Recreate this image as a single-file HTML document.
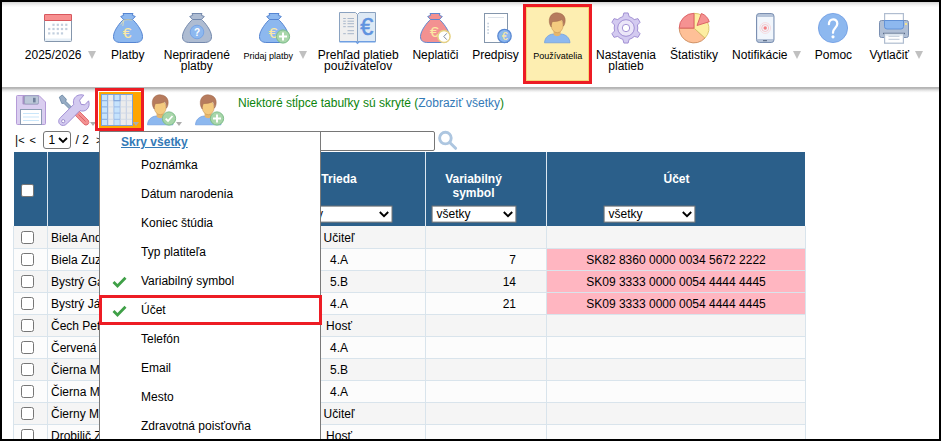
<!DOCTYPE html><html><head><meta charset="utf-8"><title>Platby</title><style>
html,body{margin:0;padding:0;background:#fff;}
body{width:941px;height:441px;overflow:hidden;position:relative;font-family:"Liberation Sans",sans-serif;font-size:12px;color:#000;}
#f{position:absolute;left:0;top:0;width:941px;height:441px;overflow:hidden;background:#fff;}
.a{position:absolute;}
svg{position:absolute;overflow:visible;}
.lb{position:absolute;text-align:center;white-space:nowrap;line-height:11px;font-size:12px;color:#000;transform:translateX(-50%);}
.sm{font-size:9px;}
.tri{position:absolute;width:0;height:0;border-left:4.3px solid transparent;border-right:4.3px solid transparent;border-top:8.200px solid #c0c0c0;}
.tr2{position:absolute;width:0;height:0;border-left:3.700px solid transparent;border-right:3.700px solid transparent;border-top:4.200px solid #acacac;}
.row{position:absolute;left:14px;width:791px;height:21px;border-bottom:1px solid #d9e4ec;}
.cb{position:absolute;left:21px;width:11px;height:11px;border:1px solid #767676;border-radius:2.5px;background:#fff;}
.nm{position:absolute;left:51px;line-height:14px;white-space:nowrap;}
.tc{position:absolute;left:339px;transform:translateX(-50%);line-height:14px;white-space:nowrap;}
.vs{position:absolute;right:425px;line-height:14px;white-space:nowrap;}
.ib{position:absolute;left:547px;width:258px;text-align:center;line-height:14px;white-space:nowrap;}
.mi{position:absolute;left:141px;line-height:14px;white-space:nowrap;}
.sel{position:absolute;background:#fff;border:1px solid #767676;box-sizing:border-box;height:17px;line-height:15px;font-size:12px;padding-left:3px;}
.hd{position:absolute;color:#fff;font-weight:bold;text-align:center;line-height:13.6px;white-space:nowrap;transform:translateX(-50%);}
</style></head><body><div id="f"><div class="a" style="left:2px;top:2px;width:937px;height:85px;background:linear-gradient(#d4d4d4 0,#e6e6e6 1.500px,#f6f6f6 3.500px,#fff 5.500px);"></div><div class="a" style="left:2px;top:86px;width:937px;height:7px;background:linear-gradient(#fff 0,#fff .6px,#b2b2b2 .7px,#b9b9b9 2.400px,#d4d4d4 3.500px,#ececec 4.800px,#fff 6.800px);"></div><svg style="left:44px;top:14px" width="28" height="28" viewBox="0 0 28 28"><rect x=".5" y=".5" width="27" height="27" rx="1" fill="#fff" stroke="#8496ac"/><rect x="1" y="24.500" width="26" height="2.500" fill="#e6eff7"/><rect x=".5" y=".5" width="27" height="6" rx=".5" fill="#f79090" stroke="#d9575d"/><rect x="8.4" y="9.7" width="2.2" height="2.2" fill="#c2cfde"/><rect x="12.7" y="9.7" width="2.2" height="2.2" fill="#c2cfde"/><rect x="16.9" y="9.7" width="2.2" height="2.2" fill="#c2cfde"/><rect x="21.2" y="9.7" width="2.2" height="2.2" fill="#c2cfde"/><rect x="4.1" y="13.9" width="2.2" height="2.2" fill="#c2cfde"/><rect x="8.4" y="13.9" width="2.2" height="2.2" fill="#c2cfde"/><rect x="12.7" y="13.9" width="2.2" height="2.2" fill="#c2cfde"/><rect x="16.9" y="13.9" width="2.2" height="2.2" fill="#c2cfde"/><rect x="21.2" y="13.9" width="2.2" height="2.2" fill="#c2cfde"/><rect x="4.1" y="18.3" width="2.2" height="2.2" fill="#c2cfde"/><rect x="8.4" y="18.3" width="2.2" height="2.2" fill="#c2cfde"/><rect x="12.7" y="18.3" width="2.2" height="2.2" fill="#c2cfde"/><rect x="16.9" y="18.3" width="2.2" height="2.2" fill="#c2cfde"/></svg><svg style="left:113px;top:13px" width="30" height="30" viewBox="0 0 30 30"><path d="M10.5 6.5C7.500 9 .5 17.500 .5 23.500C.5 27.800 3 29.500 8 29.500H22C27 29.500 29.500 27.800 29.500 23.500C29.500 17.500 22.500 9 19.500 6.500Z" fill="#8db8ef" stroke="#5585d2" stroke-width="1"/><path d="M10 .5H20L19.300 2.300L22.300 3.500L19.400 6.500H10.600L7.700 3.500L10.700 2.300Z" fill="#8db8ef" stroke="#5585d2" stroke-width="1" stroke-linejoin="round"/><path d="M10.700 7Q15 6.300 19.300 7" fill="none" stroke="#e9dc9c" stroke-width=".8"/><path d="M10.300 7.500L7.800 11.500M10.800 7.500L9.800 13" fill="none" stroke="#f3e6a6" stroke-width=".7"/><text x="14" y="24.6" font-family="Liberation Sans" font-size="15.5" fill="#fbe9a3" stroke="#fbe9a3" stroke-width=".2" text-anchor="middle">€</text></svg><svg style="left:182px;top:13px" width="30" height="30" viewBox="0 0 30 30"><path d="M10.5 6.5C7.500 9 .5 17.500 .5 23.500C.5 27.800 3 29.500 8 29.500H22C27 29.500 29.500 27.800 29.500 23.500C29.500 17.500 22.500 9 19.500 6.500Z" fill="#aebcd2" stroke="#7388ac" stroke-width="1"/><path d="M10 .5H20L19.300 2.300L22.300 3.500L19.400 6.500H10.600L7.700 3.500L10.700 2.300Z" fill="#aebcd2" stroke="#7388ac" stroke-width="1" stroke-linejoin="round"/><circle cx="15" cy="19" r="6.8" fill="#8db8ef" stroke="#6f9ee4" stroke-width=".8"/><text x="15" y="22.700" font-family="Liberation Sans" font-weight="bold" font-size="10" fill="#fff" text-anchor="middle">?</text></svg><svg style="left:259px;top:13px" width="30" height="30" viewBox="0 0 30 30"><path d="M10.5 6.5C7.500 9 .5 17.500 .5 23.500C.5 27.800 3 29.500 8 29.500H22C27 29.500 29.500 27.800 29.500 23.500C29.500 17.500 22.500 9 19.500 6.500Z" fill="#8db8ef" stroke="#5585d2" stroke-width="1"/><path d="M10 .5H20L19.300 2.300L22.300 3.500L19.400 6.500H10.600L7.700 3.500L10.700 2.300Z" fill="#8db8ef" stroke="#5585d2" stroke-width="1" stroke-linejoin="round"/><text x="14" y="24.8" font-family="Liberation Sans" font-size="15.5" fill="#fbe9a3" stroke="#fbe9a3" stroke-width=".2" text-anchor="middle">€</text><circle cx="24" cy="23.5" r="6.6" fill="#a8d6aa" stroke="#7dbd88" stroke-width="1"/><path d="M24 19.500V27.500M20 23.500H28" stroke="#fff" stroke-width="2"/></svg><svg style="left:339px;top:12px" width="37" height="32" viewBox="0 0 37 32"><path d="M.5 .5H16.500L18.500 2.500V29.500H.500Z" fill="#efefef" stroke="#8aa2c0"/><path d="M36.500 .5H20.500L18.500 2.500V29.500H36.500Z" fill="#dde9f5" stroke="#8aa2c0"/><path d="M.5 29.700H17L18.500 31.300L20 29.700H36.500" fill="none" stroke="#6f9fe2" stroke-width="1.400"/><path d="M4.200 6.5H6.800" stroke="#9fb0c6" stroke-width=".9"/><path d="M8.500 6.5H15" stroke="#9fb0c6" stroke-width=".9"/><path d="M4.200 9.2H6.800" stroke="#9fb0c6" stroke-width=".9"/><path d="M8.500 9.2H15" stroke="#9fb0c6" stroke-width=".9"/><path d="M4.200 11.7H6.800" stroke="#9fb0c6" stroke-width=".9"/><path d="M8.500 11.7H15" stroke="#9fb0c6" stroke-width=".9"/><path d="M4.200 14.7H6.800" stroke="#9fb0c6" stroke-width=".9"/><path d="M8.500 14.7H15" stroke="#9fb0c6" stroke-width=".9"/><path d="M8.500 18.7H15" stroke="#9fb0c6" stroke-width=".9"/><path d="M4.200 21.7H6.800" stroke="#9fb0c6" stroke-width=".9"/><path d="M8.500 21.7H15" stroke="#9fb0c6" stroke-width=".9"/><text x="27.700" y="22.500" font-family="Liberation Sans" font-size="23.500" fill="#5f93df" stroke="#5f93df" stroke-width=".5" text-anchor="middle">€</text></svg><svg style="left:420px;top:13px" width="30" height="30" viewBox="0 0 30 30"><path d="M10.5 6.5C7.500 9 .5 17.500 .5 23.500C.5 27.800 3 29.500 8 29.500H22C27 29.500 29.500 27.800 29.500 23.500C29.500 17.500 22.500 9 19.500 6.500Z" fill="#f39191" stroke="#5f86cf" stroke-width="1"/><path d="M10 .5H20L19.300 2.300L22.300 3.500L19.400 6.500H10.600L7.700 3.500L10.700 2.300Z" fill="#f39191" stroke="#5f86cf" stroke-width="1" stroke-linejoin="round"/><text x="14.2" y="24.2" font-family="Liberation Sans" font-size="15.5" fill="#fbe9a3" stroke="#fbe9a3" stroke-width=".2" text-anchor="middle">€</text><circle cx="24" cy="23.500" r="6.100" fill="#fff" stroke="#e6d182" stroke-width="1.500"/><path d="M26.800 20.300L23.800 23.500L26.800 26.700" fill="none" stroke="#6f7f9a" stroke-width=".9"/></svg><svg style="left:484px;top:13px" width="28" height="31" viewBox="0 0 28 31"><rect x=".5" y=".5" width="23" height="29" fill="#fff" stroke="#8496ac"/><path d="M4 4.500H20" stroke="#d5dde6" stroke-width=".8"/><rect x="3.300" y="9.7" width="1.600" height="1.600" fill="#c3cfdc"/><rect x="3.300" y="12.899999999999999" width="1.600" height="1.600" fill="#c3cfdc"/><rect x="3.300" y="16.099999999999998" width="1.600" height="1.600" fill="#c3cfdc"/><rect x="3.300" y="19.3" width="1.600" height="1.600" fill="#c3cfdc"/><circle cx="20.500" cy="23" r="6.700" fill="#8db8ef" stroke="#5a89d3" stroke-width="1.300"/><text x="20.7" y="26.5" font-family="Liberation Sans" font-size="10" fill="#fbe9a3" stroke="#fbe9a3" stroke-width=".2" text-anchor="middle">€</text></svg><div class="a" style="left:523px;top:4px;width:69px;height:80px;box-sizing:border-box;border:3px solid #ed1c24;background:#fdeeb1;box-shadow:inset 0 0 0 1px #f6d578;"></div><svg style="left:544px;top:12px" width="26" height="31" viewBox="0 0 26 31"><path d="M.5 30.800C.8 25.500 4.500 22.300 9.500 22H16.800C21.800 22.300 25.600 25.500 26 30.800Z" fill="#8db8ef" stroke="#6a9ae0" stroke-width=".7"/><path d="M9.600 18H16.600V22.600C15 24.800 11.200 24.800 9.600 22.600Z" fill="#e6b66c"/><ellipse cx="13.200" cy="13.500" rx="5.900" ry="7.200" fill="#f4ca7f" stroke="#c9985a" stroke-width=".6"/><path d="M7.200 15C5.200 12.500 4.600 8 6 5C7.500 1.800 10.500 .6 13 .8C17 .9 20.300 3 21 6.500C21.600 9.500 20.800 12.500 19.400 14.200C19.600 11.800 19.200 9.600 18 7.400C15.500 9.300 11.500 9.400 8.400 9.600C7.400 11 7.100 13 7.200 15Z" fill="#b67b5d" stroke="#9c6246" stroke-width=".5"/></svg><svg style="left:610px;top:12px" width="32" height="32" viewBox="0 0 32 32"><path d="M12.85 4.63L13.88 0.95L18.12 0.95L19.15 4.63A11.8 11.8 0 0 1 24.28 7.59L27.97 6.64L30.10 10.31L27.42 13.04A11.8 11.8 0 0 1 27.42 18.96L30.10 21.69L27.97 25.36L24.28 24.41A11.8 11.8 0 0 1 19.15 27.37L18.12 31.05L13.88 31.05L12.85 27.37A11.8 11.8 0 0 1 7.72 24.41L4.03 25.36L1.90 21.69L4.58 18.96A11.8 11.8 0 0 1 4.58 13.04L1.90 10.31L4.03 6.64L7.72 7.59A11.8 11.8 0 0 1 12.85 4.63Z" fill="#d3caf0" stroke="#9a87cf" stroke-width=".9" stroke-linejoin="round"/><circle cx="16" cy="16" r="8.300" fill="#ebe6f8" stroke="#9a87cf" stroke-width=".9"/><circle cx="16" cy="16" r="3.700" fill="#fff" stroke="#9a87cf" stroke-width=".9"/></svg><svg style="left:679px;top:13px" width="32" height="31" viewBox="0 0 32 31"><path d="M15 15.1L0.20 15.10A14.8 14.8 0 0 0 26.00 25.00Z" fill="#fec097" stroke="#c98b5e" stroke-width=".9" stroke-linejoin="round"/><path d="M15 15.1L26.00 25.00A14.8 14.8 0 0 0 15.00 0.30Z" fill="#fdeea2" stroke="#d8c266" stroke-width=".9" stroke-linejoin="round"/><path d="M15 15.1L15.00 0.30A14.8 14.8 0 0 0 0.20 15.10Z" fill="#f59292" stroke="#d95b5f" stroke-width=".9" stroke-linejoin="round"/><path d="M18 12.5L22.38 0.47A12.800 12.800 0 0 1 30.24 8.76Z" fill="#f59292" stroke="#d95b5f" stroke-width=".9" stroke-linejoin="round"/></svg><svg style="left:756px;top:13px" width="19" height="30" viewBox="0 0 19 30"><rect x=".5" y=".5" width="17.500" height="29" rx="2.800" fill="#b6c4d9" stroke="#7b90b2"/><rect x="1.300" y="4" width="15.900" height="22" fill="#f1f6fc"/><path d="M7 27.700H11" stroke="#4f607c" stroke-width="1"/><circle cx="9.200" cy="15" r="1.700" fill="#f47f83"/><circle cx="9.200" cy="15" r="3.500" fill="none" stroke="#f6a3a6" stroke-width=".6"/><circle cx="9.200" cy="15" r="5.400" fill="none" stroke="#f9c3c5" stroke-width=".5"/></svg><svg style="left:818px;top:13px" width="30" height="30" viewBox="0 0 30 30"><circle cx="15" cy="15" r="14.600" fill="#8db8ef" stroke="#6c9be2" stroke-width=".8"/><path d="M10.900 11.200C10.900 4.800 19.300 4.800 19.300 10.800C19.300 14.800 15 14.800 15 19.800" fill="none" stroke="#fff" stroke-width="2.300" stroke-linecap="round"/><circle cx="15" cy="23.800" r="1.600" fill="#fff"/></svg><svg style="left:879px;top:13px" width="30" height="31" viewBox="0 0 30 31"><rect x="5.600" y=".6" width="18.800" height="8" fill="#fff" stroke="#b0bdd0" stroke-width="1.200"/><rect x=".5" y="7.500" width="29" height="17" rx="2" fill="#b0bfd5" stroke="#7b90b2"/><path d="M5.500 7.500H24.500V13.500Q24.500 16 22 16H8Q5.500 16 5.500 13.500Z" fill="#8db8ef" stroke="#5d8fd6" stroke-width=".9"/><rect x="26" y="10" width="2" height="2" fill="#f5e38c"/><path d="M4 20.500H26" stroke="#5a6c8a" stroke-width="1.400"/><rect x="5.600" y="21" width="18.800" height="9.200" fill="#fff" stroke="#b0bdd0" stroke-width="1.200"/><path d="M6 22H24" stroke="#dfe8f2" stroke-width="1.500"/><path d="M9.500 23.300H20.500M9.500 26.300H20.500" stroke="#b6c2d2" stroke-width=".9"/></svg><div class="lb " style="left:53.2px;top:50px">2025/2026</div><div class="tri" style="left:87.500px;top:51.400px"></div><div class="lb " style="left:127.8px;top:50px">Platby</div><div class="lb " style="left:196.8px;top:50px">Nepriradené<br>platby</div><div class="lb sm" style="left:268.2px;top:50.5px">Pridaj platby</div><div class="tri" style="left:299.200px;top:51.400px"></div><div class="lb " style="left:358.2px;top:50px">Prehľad platieb<br>používateľov</div><div class="lb " style="left:435.4px;top:50px">Neplatiči</div><div class="lb " style="left:495.5px;top:50px">Predpisy</div><div class="lb sm" style="left:557.7px;top:50.5px">Používatelia</div><div class="lb " style="left:626px;top:50px">Nastavenia<br>platieb</div><div class="lb " style="left:694px;top:50px">Štatistiky</div><div class="lb " style="left:759.8px;top:50px">Notifikácie</div><div class="tri" style="left:793px;top:51.400px"></div><div class="lb " style="left:833.4px;top:50px">Pomoc</div><div class="lb " style="left:889.2px;top:50px">Vytlačiť</div><div class="tri" style="left:914.5px;top:51.400px"></div><svg style="left:16px;top:95px" width="30" height="30" viewBox="0 0 30 30"><path d="M1.500 .5H23L29.500 7V28.500Q29.500 29.500 28.500 29.500H1.500Q.5 29.500 .5 28.500V1.500Q.5 .5 1.500 .5Z" fill="#dacef0" stroke="#b59bd8"/><rect x="6.500" y=".8" width="16" height="8.700" rx="1.300" fill="#a58fc3"/><rect x="8.500" y=".8" width="14" height="8.200" rx="1.300" fill="#bcc7d8" stroke="#8c9bb3" stroke-width=".6"/><rect x="17" y="2.800" width="2.600" height="4.600" fill="#6f7f9a"/><rect x="4.500" y="14.500" width="21" height="15" fill="#fff" stroke="#8c9bb3"/><path d="M7 18.500H23M7 22H23M7 25.500H23" stroke="#c9e6fa" stroke-width="1.200"/></svg><svg style="left:58px;top:94px" width="32" height="32" viewBox="0 0 32 32"><path d="M1.300 3.200L4.300 1L8.300 5.200L7.800 7.300L15 14.500L13 16.500L5.800 9.300L3.800 9.500Z" fill="#97acc4" stroke="#62809e" stroke-width=".8" stroke-linejoin="round"/><path d="M16.800 20.800L20.800 16.800L30.200 26.200Q31.800 28.600 30 30.300Q28 32 25.900 30.200Z" fill="#f39191" stroke="#d9575d" stroke-width=".8" stroke-linejoin="round"/><path d="M20.500 20.500L27.500 27.500" stroke="#dd6368" stroke-width="1"/><path d="M25.800 1.200C22 0 17.500 1.500 16 5C15.200 7 15.300 9 15.800 10.300L2.300 23.800C0 26 .3 29 2.200 30.500C4 32 7 31.800 8.800 29.800L22 16.600C24 17.500 27 17.300 29 15.300C31 13.300 31.800 10 30.600 6.800L26.800 10.800L23 10.300L21.600 6.200Z" fill="#d3caf0" stroke="#9a87cf" stroke-width=".9" stroke-linejoin="round"/><circle cx="5.200" cy="27.200" r="1.600" fill="#fff" stroke="#8a78c2" stroke-width=".8"/></svg><div class="tr2" style="left:90px;top:122.300px"></div><div class="a" style="left:95px;top:88px;width:49px;height:42.500px;box-sizing:border-box;border:3px solid #ed1c24;background:#fff;"></div><div class="a" style="left:99px;top:92px;width:42px;height:35.500px;background:#ffa500;"></div><svg style="left:101px;top:94px" width="32" height="32" viewBox="0 0 32 32"><rect x=".5" y=".5" width="31" height="31" fill="#ececec"/><rect x=".5" y=".5" width="6.200" height="31" fill="#c6e3fc"/><rect x="12.900" y=".5" width="6.200" height="31" fill="#c6e3fc"/><path d="M6.7 .5V31.500" stroke="#7ea3d8" stroke-width=".9"/><path d="M12.9 .5V31.500" stroke="#9dbbe6" stroke-width=".9"/><path d="M19.1 .5V31.500" stroke="#a9c0e3" stroke-width=".9"/><path d="M25.3 .5V31.500" stroke="#bccbe3" stroke-width=".9"/><path d="M.5 6.7H6.700" stroke="#7ea3d8" stroke-width=".9"/><path d="M6.700 6.7H12.900" stroke="#d0d8e5" stroke-width=".9"/><path d="M12.900 6.7H19.100" stroke="#94b7e8" stroke-width=".9"/><path d="M19.100 6.7H31.500" stroke="#d0d8e5" stroke-width=".9"/><path d="M.5 12.9H6.700" stroke="#7ea3d8" stroke-width=".9"/><path d="M6.700 12.9H12.900" stroke="#d0d8e5" stroke-width=".9"/><path d="M12.900 12.9H19.100" stroke="#94b7e8" stroke-width=".9"/><path d="M19.100 12.9H31.500" stroke="#d0d8e5" stroke-width=".9"/><path d="M.5 19.1H6.700" stroke="#7ea3d8" stroke-width=".9"/><path d="M6.700 19.1H12.900" stroke="#d0d8e5" stroke-width=".9"/><path d="M12.900 19.1H19.100" stroke="#94b7e8" stroke-width=".9"/><path d="M19.100 19.1H31.500" stroke="#d0d8e5" stroke-width=".9"/><path d="M.5 25.3H6.700" stroke="#7ea3d8" stroke-width=".9"/><path d="M6.700 25.3H12.900" stroke="#d0d8e5" stroke-width=".9"/><path d="M12.900 25.3H19.100" stroke="#94b7e8" stroke-width=".9"/><path d="M19.100 25.3H31.500" stroke="#d0d8e5" stroke-width=".9"/><rect x="12.900" y=".5" width="6.200" height="6.200" fill="none" stroke="#7ea3d8" stroke-width=".9"/><rect x=".5" y=".5" width="31" height="31" fill="none" stroke="#7ea3d8"/></svg><div class="tr2" style="left:133.300px;top:122.300px"></div><svg style="left:147px;top:94px" width="26" height="31" viewBox="0 0 26 31"><path d="M.5 30.800C.8 25.500 4.500 22.300 9.500 22H16.800C21.800 22.300 25.600 25.500 26 30.800Z" fill="#8db8ef" stroke="#6a9ae0" stroke-width=".7"/><path d="M9.600 18H16.600V22.600C15 24.800 11.200 24.800 9.600 22.600Z" fill="#e6b66c"/><ellipse cx="13.200" cy="13.500" rx="5.900" ry="7.200" fill="#f4ca7f" stroke="#c9985a" stroke-width=".6"/><path d="M7.200 15C5.200 12.500 4.600 8 6 5C7.500 1.800 10.500 .6 13 .8C17 .9 20.300 3 21 6.500C21.600 9.500 20.800 12.500 19.400 14.200C19.600 11.800 19.200 9.600 18 7.400C15.500 9.300 11.500 9.400 8.400 9.600C7.400 11 7.100 13 7.200 15Z" fill="#b67b5d" stroke="#9c6246" stroke-width=".5"/><circle cx="22" cy="24.500" r="6.600" fill="#a8d6aa" stroke="#7dbd88" stroke-width="1"/><path d="M18.700 24.700L21 27L25.500 22" fill="none" stroke="#fff" stroke-width="1.800"/></svg><div class="tr2" style="left:176.100px;top:122.200px"></div><svg style="left:195px;top:94px" width="26" height="31" viewBox="0 0 26 31"><path d="M.5 30.800C.8 25.500 4.500 22.300 9.500 22H16.800C21.800 22.300 25.600 25.500 26 30.800Z" fill="#8db8ef" stroke="#6a9ae0" stroke-width=".7"/><path d="M9.600 18H16.600V22.600C15 24.800 11.200 24.800 9.600 22.600Z" fill="#e6b66c"/><ellipse cx="13.200" cy="13.500" rx="5.900" ry="7.200" fill="#f4ca7f" stroke="#c9985a" stroke-width=".6"/><path d="M7.200 15C5.200 12.500 4.600 8 6 5C7.500 1.800 10.500 .6 13 .8C17 .9 20.300 3 21 6.500C21.600 9.500 20.800 12.500 19.400 14.200C19.600 11.800 19.200 9.600 18 7.400C15.500 9.300 11.500 9.400 8.400 9.600C7.400 11 7.100 13 7.200 15Z" fill="#b67b5d" stroke="#9c6246" stroke-width=".5"/><circle cx="22" cy="24.500" r="6.600" fill="#a8d6aa" stroke="#7dbd88" stroke-width="1"/><path d="M22 20.500V28.500M18 24.500H26" stroke="#fff" stroke-width="1.900"/></svg><div class="a" style="left:238px;top:96px;line-height:14px;white-space:nowrap;color:#0c840c;">Niektoré stĺpce tabuľky sú skryté (<span style="color:#337ab7">Zobraziť všetky</span>)</div><div class="a" style="left:15px;top:133px;line-height:14px;white-space:nowrap;">|<span style="font-size:11px">&lt;</span></div><div class="a" style="left:29.500px;top:133px;line-height:14px;white-space:nowrap;font-size:11px">&lt;</div><div class="a" style="left:43px;top:131px;width:28px;height:18px;box-sizing:border-box;border:1px solid #767676;border-radius:3px;background:#fff;"></div><div class="a" style="left:48.500px;top:133px;line-height:14px;">1</div><svg style="left:57.500px;top:137px" width="10" height="7" viewBox="0 0 10 7"><path d="M1 1L5 5L9 1" fill="none" stroke="#000" stroke-width="1.800"/></svg><div class="a" style="left:75.500px;top:133px;line-height:14px;white-space:nowrap;">/ 2</div><div class="a" style="left:96px;top:133px;line-height:14px;white-space:nowrap;font-size:11px">&gt;</div><div class="a" style="left:300px;top:131px;width:135px;height:20px;box-sizing:border-box;border:1px solid #767676;border-radius:2px;background:#fff;"></div><svg style="left:437px;top:130px" width="22" height="22" viewBox="0 0 22 22"><circle cx="8.400" cy="8.100" r="5.800" fill="none" stroke="#adc6e0" stroke-width="2.900"/><path d="M13 12.700L18.600 18.300" stroke="#adc6e0" stroke-width="3" stroke-linecap="round"/></svg><div class="a" style="left:14px;top:152px;width:791px;height:74px;background:#2b5f8a;"></div><div class="a" style="left:47px;top:152px;width:1px;height:74px;background:#dbe7f1;"></div><div class="a" style="left:425px;top:152px;width:1px;height:74px;background:#dbe7f1;"></div><div class="a" style="left:546px;top:152px;width:1px;height:74px;background:#dbe7f1;"></div><div class="a" style="left:21px;top:184px;width:13px;height:13px;box-sizing:border-box;border:1px solid #767676;border-radius:2px;background:#fff;"></div><div class="hd" style="left:339px;top:173px">Trieda</div><div class="hd" style="left:473.500px;top:173px">Variabilný<br>symbol</div><div class="hd" style="left:676.500px;top:173px">Účet</div><svg style="left:0;top:0" width="941" height="441"><rect x="284.5" y="206.100" width="107.5" height="16" fill="#fff" stroke="#767676" stroke-width="1"/></svg><div class="a" style="left:289px;top:207px;line-height:14px;white-space:nowrap;">všetky</div><svg style="left:379.0px;top:211px" width="10" height="7" viewBox="0 0 10 7"><path d="M.8 1L5 5.200L9.200 1" fill="none" stroke="#000" stroke-width="1.900"/></svg><svg style="left:0;top:0" width="941" height="441"><rect x="432.1" y="206.100" width="83.8" height="16" fill="#fff" stroke="#767676" stroke-width="1"/></svg><div class="a" style="left:436.6px;top:207px;line-height:14px;white-space:nowrap;">všetky</div><svg style="left:502.9px;top:211px" width="10" height="7" viewBox="0 0 10 7"><path d="M.8 1L5 5.200L9.200 1" fill="none" stroke="#000" stroke-width="1.900"/></svg><svg style="left:0;top:0" width="941" height="441"><rect x="604.1" y="206.100" width="90.8" height="16" fill="#fff" stroke="#767676" stroke-width="1"/></svg><div class="a" style="left:608.6px;top:207px;line-height:14px;white-space:nowrap;">všetky</div><svg style="left:681.9px;top:211px" width="10" height="7" viewBox="0 0 10 7"><path d="M.8 1L5 5.200L9.200 1" fill="none" stroke="#000" stroke-width="1.900"/></svg><div class="row" style="top:226px;height:22px;background:#f5f5f5;"></div><div class="cb" style="top:231px"></div><div class="nm" style="top:231px">Biela Andrea</div><div class="tc" style="top:231px">Učiteľ</div><div class="row" style="top:249px;height:21px;background:#fcfcfc;"></div><div class="a" style="left:547px;top:249px;width:258px;height:21px;background:#ffb6c1;"></div><div class="cb" style="top:253px"></div><div class="nm" style="top:253px">Biela Zuzana</div><div class="tc" style="top:253px">4.A</div><div class="vs" style="top:253px">7</div><div class="ib" style="top:253px">SK82 8360 0000 0034 5672 2222</div><div class="row" style="top:271px;height:21px;background:#f5f5f5;"></div><div class="a" style="left:547px;top:271px;width:258px;height:21px;background:#ffb6c1;"></div><div class="cb" style="top:275px"></div><div class="nm" style="top:275px">Bystrý Gabriel</div><div class="tc" style="top:275px">5.B</div><div class="vs" style="top:275px">14</div><div class="ib" style="top:275px">SK09 3333 0000 0054 4444 4445</div><div class="row" style="top:293px;height:21px;background:#fcfcfc;"></div><div class="a" style="left:547px;top:293px;width:258px;height:21px;background:#ffb6c1;"></div><div class="cb" style="top:297px"></div><div class="nm" style="top:297px">Bystrý Ján</div><div class="tc" style="top:297px">4.A</div><div class="vs" style="top:297px">21</div><div class="ib" style="top:297px">SK09 3333 0000 0054 4444 4445</div><div class="row" style="top:315px;height:21px;background:#f5f5f5;"></div><div class="cb" style="top:319px"></div><div class="nm" style="top:319px">Čech Peter</div><div class="tc" style="top:319px">Hosť</div><div class="row" style="top:337px;height:21px;background:#fcfcfc;"></div><div class="cb" style="top:341px"></div><div class="nm" style="top:341px">Červená Eva</div><div class="tc" style="top:341px">4.A</div><div class="row" style="top:359px;height:21px;background:#f5f5f5;"></div><div class="cb" style="top:363px"></div><div class="nm" style="top:363px">Čierna Mária</div><div class="tc" style="top:363px">5.B</div><div class="row" style="top:381px;height:21px;background:#fcfcfc;"></div><div class="cb" style="top:385px"></div><div class="nm" style="top:385px">Čierna Monika</div><div class="tc" style="top:385px">4.A</div><div class="row" style="top:403px;height:21px;background:#f5f5f5;"></div><div class="cb" style="top:407px"></div><div class="nm" style="top:407px">Čierny Martin</div><div class="tc" style="top:407px">Učiteľ</div><div class="row" style="top:425px;height:21px;background:#fcfcfc;"></div><div class="cb" style="top:429px"></div><div class="nm" style="top:429px">Drobilič Zoran</div><div class="tc" style="top:429px">Hosť</div><div class="a" style="left:13px;top:226px;width:1px;height:215px;background:#d9e4ec;"></div><div class="a" style="left:47px;top:226px;width:1px;height:215px;background:#d9e4ec;"></div><div class="a" style="left:425px;top:226px;width:1px;height:215px;background:#d9e4ec;"></div><div class="a" style="left:546px;top:226px;width:1px;height:215px;background:#d9e4ec;"></div><div class="a" style="left:805px;top:226px;width:1px;height:215px;background:#d9e4ec;"></div><div class="a" style="left:99px;top:131px;width:222px;height:320px;box-sizing:border-box;border:1px solid #7a7a7a;background:#fff;"></div><div class="a" style="left:121px;top:135px;line-height:14px;font-weight:bold;color:#337ab7;text-decoration:underline;white-space:nowrap;">Skry všetky</div><div class="mi" style="top:157.5px">Poznámka</div><div class="mi" style="top:186.5px">Dátum narodenia</div><div class="mi" style="top:215.5px">Koniec štúdia</div><div class="mi" style="top:244.5px">Typ platiteľa</div><div class="mi" style="top:273.5px">Variabilný symbol</div><svg style="left:112px;top:276.0px" width="15" height="12" viewBox="0 0 15 12"><path d="M1.500 6L5.500 10L13.500 1.800" fill="none" stroke="#3fa047" stroke-width="2.800"/></svg><div class="mi" style="top:302.5px">Účet</div><svg style="left:112px;top:305.0px" width="15" height="12" viewBox="0 0 15 12"><path d="M1.500 6L5.500 10L13.500 1.800" fill="none" stroke="#3fa047" stroke-width="2.800"/></svg><div class="mi" style="top:331.5px">Telefón</div><div class="mi" style="top:360.5px">Email</div><div class="mi" style="top:389.5px">Mesto</div><div class="mi" style="top:418.5px">Zdravotná poisťovňa</div><div class="a" style="left:99px;top:295px;width:223px;height:30px;box-sizing:border-box;border:3px solid #ed1c24;"></div><div class="a" style="left:0;top:0;width:941px;height:441px;box-sizing:border-box;border:2px solid #000;"></div></div></body></html>
